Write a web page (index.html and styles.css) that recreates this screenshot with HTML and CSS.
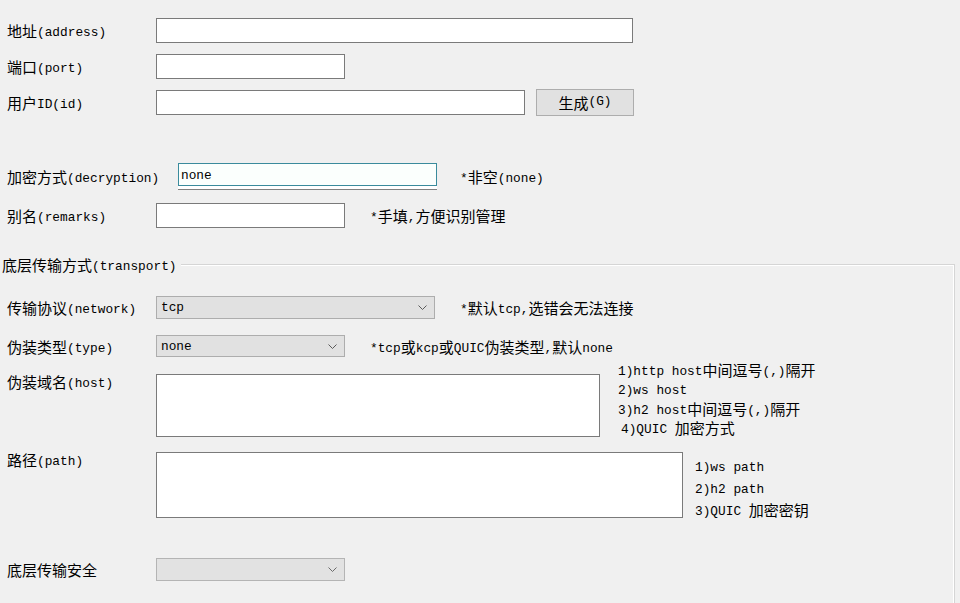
FILE: index.html
```html
<!DOCTYPE html>
<html>
<head>
<meta charset="utf-8">
<link rel="stylesheet" href="styles.css">
</head>
<body>
<div class="form">
  <div class="row r1">
    <div class="lbl">地址<span class="a">(address)</span></div>
    <div class="input w477"></div>
  </div>
  <div class="row r2">
    <div class="lbl">端口<span class="a">(port)</span></div>
    <div class="input w189"></div>
  </div>
  <div class="row r3">
    <div class="lbl">用户<span class="a">ID(id)</span></div>
    <div class="input w369"></div>
    <div class="btn">生成<span class="a">(G)</span></div>
  </div>
  <div class="row r4">
    <div class="lbl wide">加密方式<span class="a">(decryption)</span></div>
    <div class="combo"><div class="combo-edit"><span class="a">none</span></div></div>
    <div class="hint ml23"><span class="a">*</span>非空<span class="a">(none)</span></div>
  </div>
  <div class="row r5">
    <div class="lbl">别名<span class="a">(remarks)</span></div>
    <div class="input w189"></div>
    <div class="hint ml25"><span class="a">*</span>手填<span class="a">,</span>方便识别管理</div>
  </div>

  <div class="group">
    <div class="group-head">
      <div class="group-title">底层传输方式<span class="a">(transport)</span></div>
      <div class="rule"></div>
    </div>
    <div class="group-body">
      <div class="row g1">
        <div class="lbl">传输协议<span class="a">(network)</span></div>
        <div class="select w279 sh23"><span class="a sel">tcp</span><svg width="9" height="5" viewBox="0 0 9 5"><polyline points="0.5,0.5 4.5,4.5 8.5,0.5" fill="none" stroke="#5a5a5a" stroke-width="1"/></svg></div>
        <div class="hint ml25"><span class="a">*</span>默认<span class="a">tcp,</span>选错会无法连接</div>
      </div>
      <div class="row g2">
        <div class="lbl">伪装类型<span class="a">(type)</span></div>
        <div class="select w189 sh22"><span class="a sel">none</span><svg width="9" height="5" viewBox="0 0 9 5"><polyline points="0.5,0.5 4.5,4.5 8.5,0.5" fill="none" stroke="#5a5a5a" stroke-width="1"/></svg></div>
        <div class="hint ml25"><span class="a">*tcp</span>或<span class="a">kcp</span>或<span class="a">QUIC</span>伪装类型<span class="a">,</span>默认<span class="a">none</span></div>
      </div>
      <div class="row top g3">
        <div class="lbl lt1">伪装域名<span class="a">(host)</span></div>
        <div class="textarea host"></div>
        <div class="notes host-notes">
          <div class="nl"><span class="a">1)http host</span>中间逗号<span class="a">(,)</span>隔开</div>
          <div class="nl"><span class="a">2)ws host</span></div>
          <div class="nl"><span class="a">3)h2 host</span>中间逗号<span class="a">(,)</span>隔开</div>
          <div class="nl ind"><span class="a">4)QUIC </span>加密方式</div>
        </div>
      </div>
      <div class="row top g4">
        <div class="lbl lt2">路径<span class="a">(path)</span></div>
        <div class="textarea path"></div>
        <div class="notes path-notes">
          <div class="pl"><span class="a">1)ws path</span></div>
          <div class="pl"><span class="a">2)h2 path</span></div>
          <div class="pl"><span class="a">3)QUIC </span>加密密钥</div>
        </div>
      </div>
      <div class="row g5">
        <div class="lbl">底层传输安全</div>
        <div class="select disabled w189 sh23"><span></span><svg width="9" height="5" viewBox="0 0 9 5"><polyline points="0.5,0.5 4.5,4.5 8.5,0.5" fill="none" stroke="#6a6a6a" stroke-width="1"/></svg></div>
      </div>
    </div>
  </div>
</div>
</body>
</html>
```

FILE: styles.css
```css
html, body {
  margin: 0;
  padding: 0;
  height: 603px;
  overflow: hidden;
  background: #f0f0f0;
}
body {
  font-family: "Noto Sans CJK SC", "Liberation Sans", sans-serif;
  font-size: 15px;
  color: #000;
}
.a {
  font-family: "Liberation Mono", "Noto Sans CJK SC", monospace;
  font-size: 12.8px;
  line-height: 1;
  vertical-align: 1px;
}
.a.sel { vertical-align: baseline; margin-top: 2px; }
.form {
  display: flex;
  flex-direction: column;
  height: 603px;
  padding-top: 18px;
  box-sizing: border-box;
}
.row {
  display: flex;
  align-items: center;
  flex: none;
}
.row.top { align-items: flex-start; }
.lbl {
  width: 156px;
  padding-left: 7px;
  box-sizing: border-box;
  height: 17px;
  line-height: 17px;
  white-space: nowrap;
  flex: none;
}
.lbl.wide { width: 178px; }
.lt1 { margin-top: -1px; }
.lt2 { margin-top: -1px; }

.input {
  height: 25px;
  background: #fff;
  border: 1px solid #7a7a7a;
  box-sizing: border-box;
  flex: none;
}
.w477 { width: 477px; }
.w369 { width: 369px; }
.w279 { width: 279px; }
.w189 { width: 189px; }

.r1 { height: 25px; }
.r2 { margin-top: 11px; height: 25px; }
.r3 { margin-top: 10px; height: 27px; }
.r4 { margin-top: 47px; height: 27px; }
.r5 { margin-top: 13px; height: 25px; }

.btn {
  margin-left: 11px;
  width: 98px;
  height: 27px;
  box-sizing: border-box;
  background: #e1e1e1;
  border: 1px solid #adadad;
  display: flex;
  align-items: center;
  justify-content: center;
  line-height: 17px;
}

.combo {
  width: 259px;
  height: 27px;
  box-sizing: border-box;
  background: #fff;
  border-bottom: 1px solid #808080;
  flex: none;
}
.combo-edit {
  height: 23px;
  box-sizing: border-box;
  border: 1px solid #3a8b9c;
  background: #fbfffd;
  padding-left: 2px;
  line-height: 20px;
}

.hint {
  height: 17px;
  line-height: 17px;
  white-space: nowrap;
}
.ml23 { margin-left: 23px; }
.ml25 { margin-left: 25px; }

.group {
  flex: 1;
  display: flex;
  flex-direction: column;
  margin-top: 28px;
  margin-right: 5px;
}
.group-head {
  display: flex;
  height: 17px;
  flex: none;
}
.group-title {
  padding-left: 2px;
  height: 17px;
  line-height: 17px;
  white-space: nowrap;
  padding-right: 4px;
}
.rule {
  flex: 1;
  align-self: flex-end;
  height: 8px;
  border-top: 1px solid #d5d5d5;
  border-right: 1px solid #d5d5d5;
  box-shadow: inset 0 1px 0 #fff, inset -1px 0 0 #fff;
}
.group-body {
  flex: 1;
  display: flex;
  flex-direction: column;
  border-right: 1px solid #d5d5d5;
  box-shadow: inset -1px 0 0 #fff;
}
.g1 { margin-top: 23px; height: 23px; }
.g2 { margin-top: 16px; height: 22px; }
.g3 { margin-top: 17px; height: 63px; }
.g4 { margin-top: 15px; height: 66px; }
.g5 { margin-top: 40px; height: 23px; }

.select {
  box-sizing: border-box;
  background: #e1e1e1;
  border: 1px solid #adadad;
  display: flex;
  align-items: center;
  justify-content: space-between;
  padding: 0 7px 0 4px;
  flex: none;
}
.sh23 { height: 23px; }
.sh22 { height: 22px; }
.select.disabled {
  background: #e2e2e2;
  border-color: #b4b4b4;
}
.select svg { flex: none; }

.textarea {
  background: #fff;
  border: 1px solid #7a7a7a;
  box-sizing: border-box;
  flex: none;
}
.textarea.host { width: 444px; height: 63px; }
.textarea.path { width: 527px; height: 66px; }

.notes { white-space: nowrap; }
.host-notes {
  margin-left: 18px;
  margin-top: -14px;
}
.nl { height: 19.3px; line-height: 19.3px; }
.host-notes .ind { padding-left: 3px; }
.path-notes {
  margin-left: 12px;
  margin-top: 3px;
}
.pl { height: 22px; line-height: 22px; }
```
